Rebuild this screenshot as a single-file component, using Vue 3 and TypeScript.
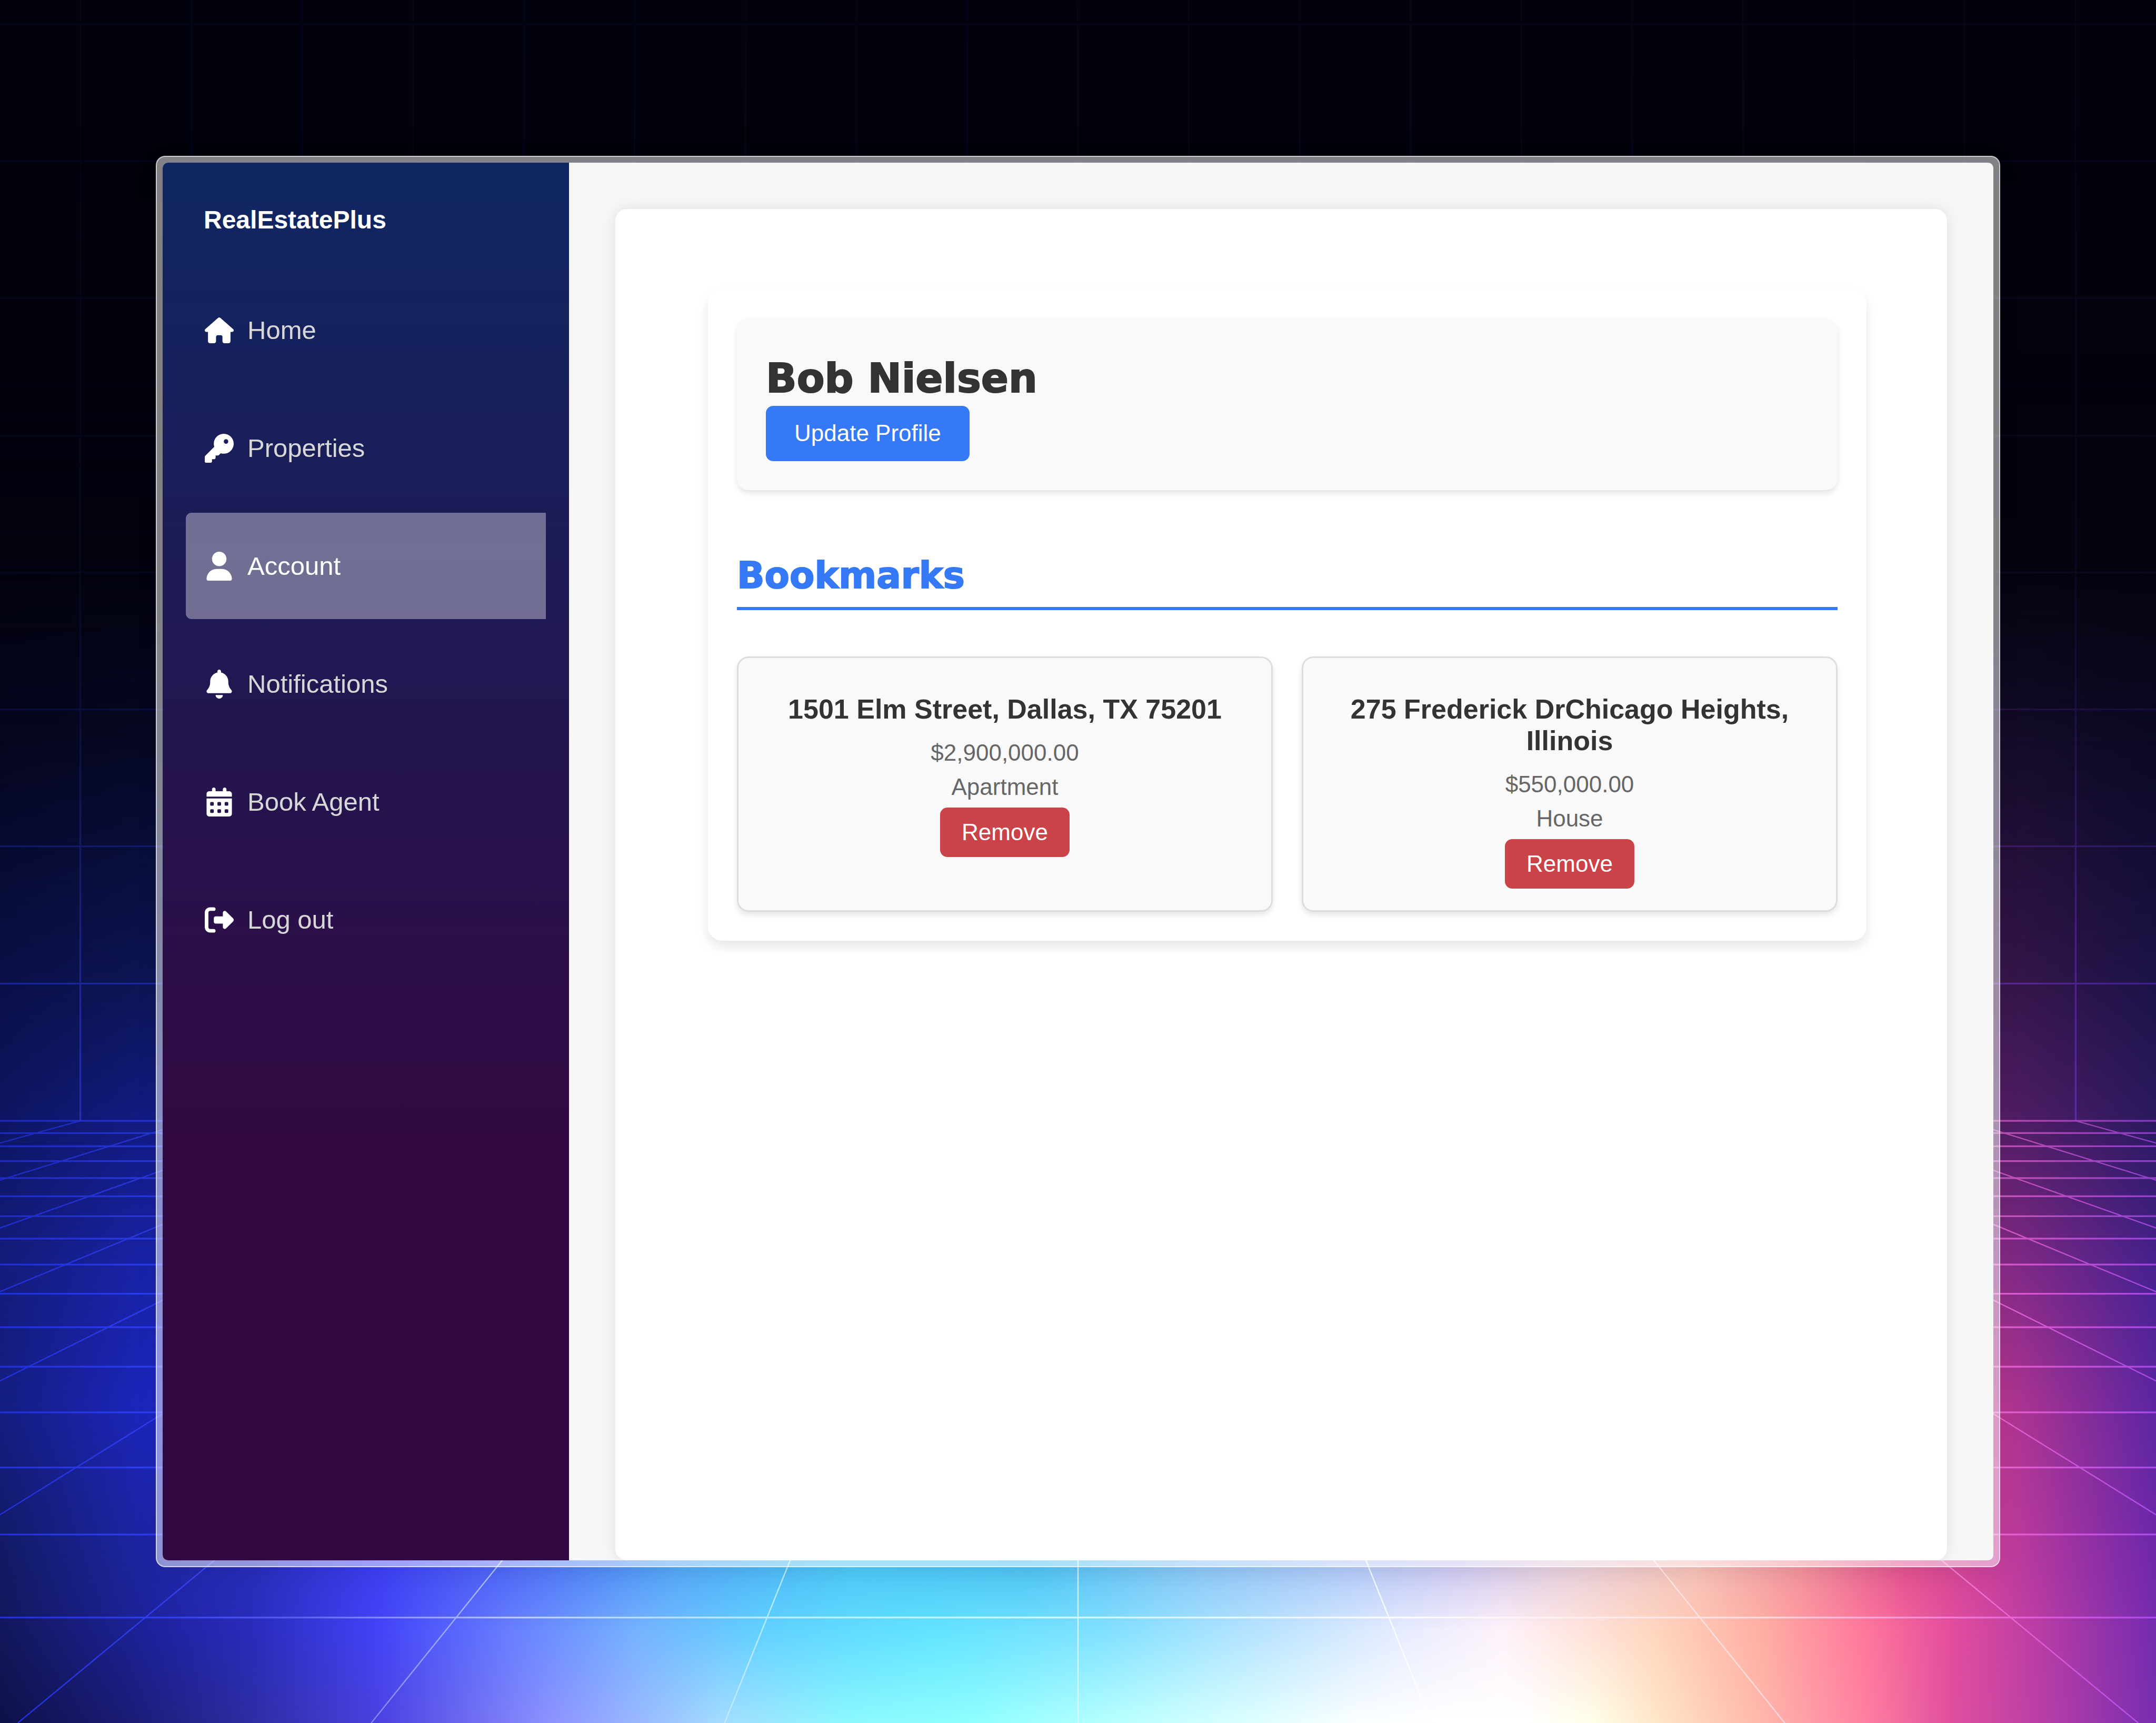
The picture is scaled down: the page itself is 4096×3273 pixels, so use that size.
<script setup lang="ts">
interface NavItem {
  label: string
  viewBox: string
  path: string
  active?: boolean
}

interface Bookmark {
  address: string
  price: string
  kind: string
}

type Stop = [x: number, color: string]

interface GlowRow {
  from: number
  to: number
  stops: Stop[]
}

const navItems: NavItem[] = [
  {
    label: 'Home',
    viewBox: '0 0 576 512',
    path: 'M575.8 255.5c0 18-15 32.1-32 32.1h-32l.7 160.2c0 2.7-.2 5.4-.5 8.1V472c0 22.1-17.9 40-40 40H456c-1.1 0-2.2 0-3.3-.1c-1.4 .1-2.8 .1-4.2 .1H416 392c-22.1 0-40-17.9-40-40V448 384c0-17.7-14.3-32-32-32H256c-17.7 0-32 14.3-32 32v64 24c0 22.1-17.9 40-40 40H160 128.1c-1.5 0-3-.1-4.5-.2c-1.2 .1-2.4 .2-3.6 .2H104c-22.1 0-40-17.9-40-40V360c0-.9 0-1.9 .1-2.8V287.6H32c-18 0-32-14-32-32.1c0-9 3-17 10-24L266.4 8c7-7 15-8 22-8s15 2 21 7L564.8 231.5c8 7 12 15 11 24z',
  },
  {
    label: 'Properties',
    viewBox: '0 0 512 512',
    path: 'M336 352c97.2 0 176-78.8 176-176S433.2 0 336 0S160 78.8 160 176c0 18.7 2.9 36.8 8.3 53.7L7 391c-4.5 4.5-7 10.6-7 17v80c0 13.3 10.7 24 24 24h80c13.3 0 24-10.7 24-24V448h40c13.3 0 24-10.7 24-24V384h40c6.4 0 12.5-2.5 17-7l33.3-33.3c16.9 5.4 35 8.3 53.7 8.3zM376 96a40 40 0 1 1 0 80 40 40 0 1 1 0-80z',
  },
  {
    label: 'Account',
    viewBox: '0 0 448 512',
    active: true,
    path: 'M224 256A128 128 0 1 0 224 0a128 128 0 1 0 0 256zm-45.7 48C79.8 304 0 383.8 0 482.3C0 498.7 13.3 512 29.7 512H418.3c16.4 0 29.7-13.3 29.7-29.7C448 383.8 368.2 304 269.7 304H178.3z',
  },
  {
    label: 'Notifications',
    viewBox: '0 0 448 512',
    path: 'M224 0c-17.7 0-32 14.3-32 32V51.2C119 66 64 130.6 64 208v18.8c0 47-17.3 92.4-48.5 127.6l-7.4 8.3c-8.4 9.4-10.4 22.9-5.3 34.4S19.4 416 32 416H416c12.6 0 24-7.4 29.2-18.9s3.1-25-5.3-34.4l-7.4-8.3C401.3 319.2 384 273.9 384 226.8V208c0-77.4-55-142-128-156.8V32c0-17.7-14.3-32-32-32zm45.3 493.3c12-12 18.7-28.3 18.7-45.3H224 160c0 17 6.7 33.3 18.7 45.3s28.3 18.7 45.3 18.7s33.3-6.7 45.3-18.7z',
  },
  {
    label: 'Book Agent',
    viewBox: '0 0 448 512',
    path: 'M128 0c17.7 0 32 14.3 32 32V64H288V32c0-17.7 14.3-32 32-32s32 14.3 32 32V64h48c26.5 0 48 21.5 48 48v48H0V112C0 85.5 21.5 64 48 64H96V32c0-17.7 14.3-32 32-32zM0 192H448V464c0 26.5-21.5 48-48 48H48c-26.5 0-48-21.5-48-48V192zm64 80v32c0 8.8 7.2 16 16 16h32c8.8 0 16-7.2 16-16V272c0-8.8-7.2-16-16-16H80c-8.8 0-16 7.2-16 16zm128 0v32c0 8.8 7.2 16 16 16h32c8.8 0 16-7.2 16-16V272c0-8.8-7.2-16-16-16H208c-8.8 0-16 7.2-16 16zm144-16c-8.8 0-16 7.2-16 16v32c0 8.8 7.2 16 16 16h32c8.8 0 16-7.2 16-16V272c0-8.8-7.2-16-16-16H336zM64 400v32c0 8.8 7.2 16 16 16h32c8.8 0 16-7.2 16-16V400c0-8.8-7.2-16-16-16H80c-8.8 0-16 7.2-16 16zm144-16c-8.8 0-16 7.2-16 16v32c0 8.8 7.2 16 16 16h32c8.8 0 16-7.2 16-16V400c0-8.8-7.2-16-16-16H208zm112 16v32c0 8.8 7.2 16 16 16h32c8.8 0 16-7.2 16-16V400c0-8.8-7.2-16-16-16H336c-8.8 0-16 7.2-16 16z',
  },
  {
    label: 'Log out',
    viewBox: '0 0 512 512',
    path: 'M377.9 105.9L500.7 228.7c7.2 7.2 11.3 17.1 11.3 27.3s-4.1 20.1-11.3 27.3L377.9 406.1c-6.4 6.4-15 9.9-24 9.9c-18.7 0-33.9-15.2-33.9-33.9l0-62.1-128 0c-17.7 0-32-14.3-32-32l0-64c0-17.7 14.3-32 32-32l128 0 0-62.1c0-18.7 15.2-33.9 33.9-33.9c9 0 17.6 3.6 24 9.9zM160 96L96 96c-17.7 0-32 14.3-32 32l0 256c0 17.7 14.3 32 32 32l64 0c17.7 0 32 14.3 32 32s-14.3 32-32 32l-64 0c-53 0-96-43-96-96L0 128C0 75 43 32 96 32l64 0c17.7 0 32 14.3 32 32s-14.3 32-32 32z',
  },
]

const bookmarks: Bookmark[] = [
  { address: '1501 Elm Street, Dallas, TX 75201', price: '$2,900,000.00', kind: 'Apartment' },
  { address: '275 Frederick DrChicago Heights, Illinois', price: '$550,000.00', kind: 'House' },
]

// Wallpaper: every row is a horizontal gradient that fades in over the row above it.
const W = 5088
const H = 4066
const HORIZON = 2645
const CENTER = 2544

const glowRows: GlowRow[] = [
  { from: 300, to: 1350, stops: [[0, '#03030f'], [5088, '#04040f']] },
  { from: 1350, to: 1750, stops: [[0, '#05061e'], [368, '#060824'], [2544, '#120c30'], [4720, '#150c2a'], [5088, '#0b0924']] },
  { from: 1750, to: 2320, stops: [[0, '#0a1048'], [368, '#0d1656'], [2544, '#301660'], [4720, '#37164a'], [5088, '#1c1348']] },
  { from: 2320, to: 2650, stops: [[0, '#0e1662'], [368, '#131c86'], [2544, '#402080'], [4720, '#541e66'], [5088, '#2b1a60']] },
  { from: 2650, to: 3000, stops: [[0, '#141c7a'], [368, '#1a24ac'], [2544, '#5040a0'], [4720, '#8a2b86'], [5088, '#472290']] },
  { from: 3000, to: 3320, stops: [[0, '#141e80'], [368, '#1e26c2'], [2544, '#6060c0'], [4720, '#b6368e'], [5088, '#5c26a2']] },
  {
    from: 3320,
    to: 3700,
    stops: [[0, '#121a62'], [368, '#1e26a4'], [600, '#282eba'], [900, '#3e40f2'], [1200, '#506af6'], [1600, '#54a8f6'], [2000, '#4cc8f6'], [2450, '#50c4f4'], [2800, '#88c6f6'], [3200, '#b4caf8'], [3450, '#d0caf0'], [3700, '#e8d0dc'], [4000, '#f6c2b8'], [4250, '#f2929c'], [4500, '#e25290'], [4720, '#c63e9c'], [5088, '#7028ac']],
  },
  {
    from: 3700,
    to: 3850,
    stops: [[0, '#12185a'], [368, '#1e229e'], [600, '#2a2cbc'], [900, '#4444f8'], [1200, '#687eff'], [1500, '#76b2ff'], [1800, '#62d2ff'], [2200, '#62e4ff'], [2600, '#80e0ff'], [3000, '#bce4ff'], [3300, '#e6ecff'], [3550, '#fff2fa'], [3900, '#ffd6c0'], [4150, '#ffb0a4'], [4400, '#ff789c'], [4600, '#e44e9e'], [4800, '#bc3ea4'], [5088, '#742cb0']],
  },
  {
    from: 3850,
    to: 4066,
    stops: [[0, '#0e1148'], [300, '#1a1c74'], [600, '#2e2ea4'], [900, '#4c42e0'], [1300, '#8e92ff'], [1700, '#a4dcff'], [2000, '#8cf8ff'], [2300, '#90ffff'], [2800, '#ccffff'], [3200, '#fafeff'], [3400, '#ffffff'], [3600, '#ffffff'], [3760, '#fffee8'], [3920, '#ffe4c8'], [4150, '#ffb8ac'], [4400, '#ff80a0'], [4600, '#e0509e'], [4800, '#bc40a6'], [5088, '#782eb0']],
  },
]

const wallRows = [58, 381, 704, 1028, 1351, 1674, 1997, 2321]
const wallColumns = Array.from({ length: 19 }, (_, i) => CENTER + (i - 9) * 261.6)
const floorRows = [2645, 2674, 2705, 2740, 2780, 2823, 2870, 2923, 2984, 3053, 3132, 3225, 3333, 3463, 3621, 3817]
const floorRays = Array.from({ length: 19 }, (_, i) => ({
  x1: CENTER + (i - 9) * 261.6,
  x2: CENTER + (i - 9) * 834,
}))
</script>

<template>
  <div class="desktop">
    <svg class="wallpaper" :viewBox="`0 0 ${W} ${H}`" preserveAspectRatio="none" aria-hidden="true">
      <defs>
        <template v-for="(row, i) in glowRows" :key="i">
          <linearGradient :id="`glow-${i}`" gradientUnits="userSpaceOnUse" x1="0" y1="0" :x2="W" y2="0">
            <stop v-for="[x, color] in row.stops" :key="x" :offset="x / W" :stop-color="color" />
          </linearGradient>
          <linearGradient :id="`fade-${i}`" gradientUnits="userSpaceOnUse" x1="0" :y1="row.from" x2="0" :y2="row.to">
            <stop offset="0" stop-color="#000" />
            <stop offset="1" stop-color="#fff" />
          </linearGradient>
          <mask :id="`mask-${i}`" maskUnits="userSpaceOnUse" x="0" y="0" :width="W" :height="H">
            <rect :width="W" :height="H" :fill="`url(#fade-${i})`" />
          </mask>
        </template>

        <linearGradient id="wall-color" gradientUnits="userSpaceOnUse" x1="0" y1="0" :x2="W" y2="0">
          <stop offset="0" stop-color="#2836dc" />
          <stop offset="0.25" stop-color="#2c38dc" />
          <stop offset="0.9" stop-color="#8a34c8" />
          <stop offset="1" stop-color="#5c30c8" />
        </linearGradient>
        <linearGradient id="wall-fade" gradientUnits="userSpaceOnUse" x1="0" y1="0" x2="0" :y2="HORIZON">
          <stop offset="0" stop-color="#0e0e0e" />
          <stop offset="0.5" stop-color="#161616" />
          <stop offset="0.63" stop-color="#2c2c2c" />
          <stop offset="0.76" stop-color="#545454" />
          <stop offset="0.88" stop-color="#888888" />
          <stop offset="1" stop-color="#b8b8b8" />
        </linearGradient>
        <mask id="wall-mask" maskUnits="userSpaceOnUse" x="0" y="0" :width="W" :height="H">
          <rect :width="W" :height="H" fill="url(#wall-fade)" />
        </mask>

        <linearGradient id="floor-color" gradientUnits="userSpaceOnUse" x1="0" y1="0" :x2="W" y2="0">
          <stop offset="0" stop-color="#2434ec" />
          <stop offset="0.08" stop-color="#3444fa" />
          <stop offset="0.14" stop-color="#6468f4" />
          <stop offset="0.19" stop-color="#9ca4ff" />
          <stop offset="0.24" stop-color="#c4d8ff" />
          <stop offset="0.4" stop-color="#c8f8ff" />
          <stop offset="0.65" stop-color="#ffffff" />
          <stop offset="0.82" stop-color="#ffe0e4" />
          <stop offset="0.89" stop-color="#fa98e0" />
          <stop offset="0.94" stop-color="#ec62dc" />
          <stop offset="1" stop-color="#b450f4" />
        </linearGradient>
        <linearGradient id="floor-fade" gradientUnits="userSpaceOnUse" x1="0" :y1="HORIZON" x2="0" :y2="H">
          <stop offset="0" stop-color="#a0a0a0" />
          <stop offset="0.35" stop-color="#d8d8d8" />
          <stop offset="1" stop-color="#e0e0e0" />
        </linearGradient>
        <mask id="floor-mask" maskUnits="userSpaceOnUse" x="0" y="0" :width="W" :height="H">
          <rect :width="W" :height="H" fill="url(#floor-fade)" />
        </mask>
      </defs>

      <rect :width="W" :height="H" fill="#02020c" />
      <rect
        v-for="(_, i) in glowRows"
        :key="i"
        :width="W"
        :height="H"
        :fill="`url(#glow-${i})`"
        :mask="`url(#mask-${i})`"
      />

      <g mask="url(#wall-mask)" stroke="url(#wall-color)" stroke-width="4">
        <line v-for="y in wallRows" :key="y" x1="0" :y1="y" :x2="W" :y2="y" />
        <line v-for="x in wallColumns" :key="x" :x1="x" y1="0" :x2="x" :y2="HORIZON" />
      </g>
      <g mask="url(#floor-mask)" stroke="url(#floor-color)">
        <line v-for="y in floorRows" :key="y" x1="0" :y1="y" :x2="W" :y2="y" stroke-width="4" />
        <line
          v-for="ray in floorRays"
          :key="ray.x1"
          :x1="ray.x1"
          :y1="HORIZON"
          :x2="ray.x2"
          :y2="H"
          stroke-width="3"
        />
      </g>
    </svg>

    <div class="frame">
      <div class="app">
        <aside class="sidebar">
          <a class="brand" href="#">RealEstatePlus</a>
          <nav class="nav" aria-label="Main">
            <a
              v-for="item in navItems"
              :key="item.label"
              class="nav-link"
              :class="{ active: item.active }"
              :aria-current="item.active ? 'page' : undefined"
              href="#"
            >
              <svg class="nav-icon" :viewBox="item.viewBox" aria-hidden="true">
                <path :d="item.path" fill="currentColor" />
              </svg>
              <span>{{ item.label }}</span>
            </a>
          </nav>
        </aside>

        <main class="main">
          <div class="sheet">
            <div class="panel">
              <section class="profile">
                <h1 class="name">Bob Nielsen</h1>
                <button class="btn btn-primary" type="button">Update Profile</button>
              </section>

              <h2 class="section-title">Bookmarks</h2>
              <div class="bookmarks">
                <article v-for="bookmark in bookmarks" :key="bookmark.address" class="bookmark">
                  <h3 class="address">{{ bookmark.address }}</h3>
                  <p class="detail">{{ bookmark.price }}</p>
                  <p class="detail">{{ bookmark.kind }}</p>
                  <button class="btn btn-danger" type="button">Remove</button>
                </article>
              </div>
            </div>
          </div>
        </main>
      </div>
    </div>
  </div>
</template>

<style>
body {
  margin: 0;
  background: #02020c;
}
</style>

<style scoped>
.desktop {
  position: relative;
  display: flex;
  box-sizing: border-box;
  min-height: 100vh;
  padding: 296px;
  overflow: hidden;
  font-family: "Liberation Sans", Arial, sans-serif;
}

.wallpaper {
  position: absolute;
  inset: 0;
  width: 100%;
  height: 100%;
}

.frame {
  position: relative;
  display: flex;
  flex: 1;
  padding: 11px;
  border: 2px solid rgba(255, 255, 255, 0.6);
  border-radius: 18px;
  background: rgba(255, 255, 255, 0.5);
  box-shadow: 0 8px 40px rgba(0, 0, 0, 0.08);
}

.app {
  display: flex;
  flex: 1;
  overflow: hidden;
  border-radius: 10px;
  background: #f7f7f7;
}

.sidebar {
  box-sizing: border-box;
  flex: 0 0 772px;
  padding: 0 44px;
  background: linear-gradient(180deg, #0f2763 0%, #320942 70%);
}

.brand {
  display: block;
  padding: 81px 34px 80px;
  color: #fff;
  font-size: 48px;
  font-weight: 700;
  line-height: 56px;
  text-decoration: none;
}

.nav {
  display: flex;
  flex-direction: column;
  gap: 22px;
}

.nav-link {
  display: flex;
  align-items: center;
  gap: 26px;
  height: 202px;
  padding: 0 36px;
  border-radius: 11px 0 0 11px;
  color: #d7d7d7;
  font-size: 49px;
  line-height: 56px;
  text-decoration: none;
}

.nav-link.active {
  background: rgba(255, 255, 255, 0.37);
  color: #fff;
}

.nav-icon {
  flex: none;
  width: 55px;
  height: 55px;
  color: #fff;
}

.main {
  display: flex;
  flex: 1;
  min-width: 0;
  padding: 88px 88px 0;
}

.sheet {
  flex: 1;
  min-width: 0;
  padding: 153px 153px 88px 176px;
  border-radius: 22px;
  background: #fff;
  box-shadow: 0 0 28px rgba(0, 0, 0, 0.1);
}

.panel {
  padding: 55px;
  border-radius: 27px;
  background: #fff;
  box-shadow: 0 11px 22px rgba(0, 0, 0, 0.1);
}

.profile {
  padding: 55px;
  border-radius: 22px;
  background: #f9f9f9;
  box-shadow: 0 6px 11px rgba(0, 0, 0, 0.1);
}

.name,
.section-title {
  margin: 0;
  font-family: "Arial Black", "DejaVu Sans", sans-serif;
  font-weight: 700;
  -webkit-text-stroke: 2px currentColor;
}

.name {
  padding-top: 7px;
  color: #333;
  font-size: 77px;
  line-height: 104px;
}

.section-title {
  margin: 109px 0 88px;
  padding: 7px 0 14px;
  border-bottom: 6px solid #3579f6;
  color: #3579f6;
  font-size: 69px;
  line-height: 92px;
}

.btn {
  display: block;
  border: 0;
  border-radius: 14px;
  color: #fff;
  font-family: inherit;
  font-size: 44px;
  line-height: 50px;
  cursor: pointer;
}

.btn-primary {
  padding: 27px 54px 28px;
  background: #3579f6;
}

.btn-danger {
  padding: 22px 41px;
  background: #ca4349;
}

.bookmarks {
  display: grid;
  grid-template-columns: repeat(2, minmax(0, 1fr));
  gap: 55px;
}

.bookmark {
  display: flex;
  flex-direction: column;
  align-items: center;
  gap: 14px;
  padding: 67px 41px 41px;
  border: 3px solid #ddd;
  border-radius: 22px;
  background: #f9f9f9;
  box-shadow: 0 6px 11px rgba(0, 0, 0, 0.1);
  text-align: center;
}

.address {
  margin: 0 0 13px;
  color: #333;
  font-size: 52px;
  font-weight: 700;
  line-height: 60px;
}

.detail {
  margin: 0;
  color: #666;
  font-size: 44px;
  line-height: 51px;
}
</style>
